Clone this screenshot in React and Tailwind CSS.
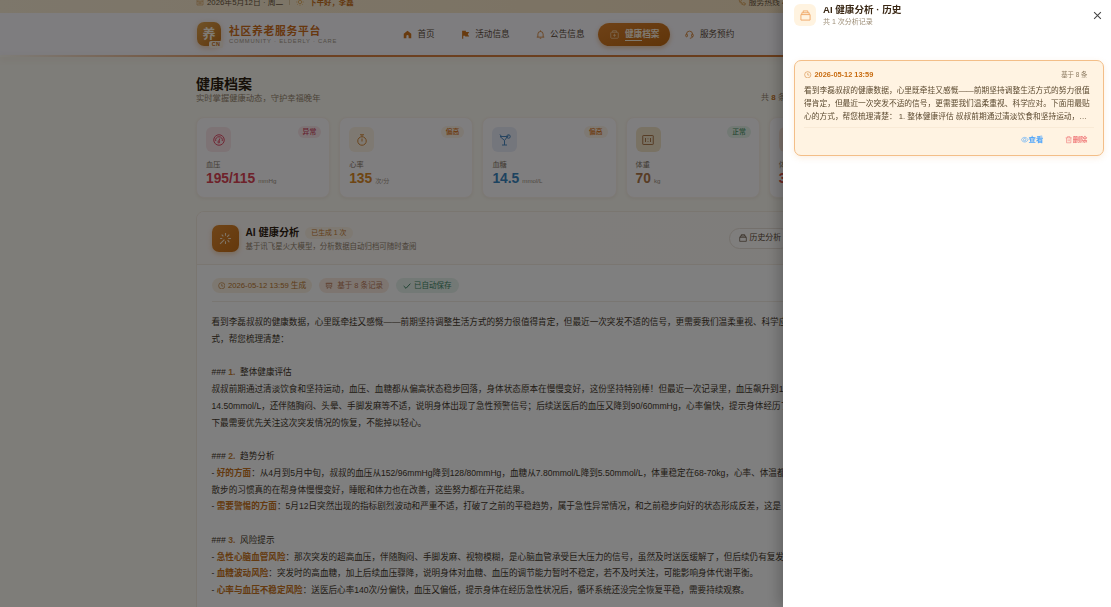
import React from 'react';
import clsx from 'clsx';

const icons = {
  calendar: <><path d="M3 5h18v16H3zM3 10h18M8 2v5M16 2v5M7 14h10M7 17h10" /></>,
  sun: <><circle cx="12" cy="12" r="5" /><path d="M12 1v3M12 20v3M1 12h3M20 12h3M4 4l2 2M18 18l2 2M4 20l2-2M18 6l2-2" /></>,
  phone: <path d="M4 3c-2 9 8 19 17 18l1-5-5-2-3 2c-3-1-5-4-6-6l2-3-2-5z" />,
  home: <path d="M12 2 2 10v12h7v-6a3 3 0 0 1 6 0v6h7V10z" fill="currentColor" stroke="none" />,
  flag: <path d="M3 2h10v3h9l-4 6 4 6H11v-2H6v8H3z" fill="currentColor" stroke="none" />,
  bell: <path d="M2 19h20M5 19v-8a7 7 0 0 1 14 0v8M12 1v3M10 22h4" />,
  kit: <><rect x="2" y="6" width="20" height="16" rx="2" /><path d="M7 6V2h10v4M12 10v8M8 14h8" /></>,
  headset: <><path d="M4 12V11a8 8 0 0 1 16 0v1M20 17c0 3-3 5-7 5" /><rect x="2" y="11" width="4.500" height="7" rx="2" /><rect x="17.500" y="11" width="4.500" height="7" rx="2" /></>,
  odometer: <><circle cx="12" cy="12" r="10.500" /><path d="M5.500 14a6.500 6.500 0 0 1 6.500-8.500 6.500 6.500 0 0 1 6.500 8.500M13.500 9l-1.500 5" /><circle cx="11.500" cy="16" r="1.800" /></>,
  timer: <><circle cx="12" cy="14" r="8.500" /><path d="M12 9v6M12 5.500V2M8 1.500h8" /></>,
  goblet: <><path d="M2 5h15l-6 8zM11 13v9M6 22h10M5 5 2 1M16 7l3-4" /><circle cx="19" cy="5" r="3.500" /></>,
  scale: <><rect x="1.500" y="3" width="21" height="18" rx="1" /><path d="M7 8v8M17 8v8M12 9v1.500M12 14v1.500" /></>,
  magic: <path d="M12 2v5M12 17v5M17 12h5M2 12h4M5 5l3 3M19 5l-4 4M16 15l3 4M10 14l-8 8" />,
  box: <path d="M2 10h20v12H2zM4 10V6h16v4M7 6V2h10v4" />,
  clock: <><circle cx="12" cy="12" r="10" /><path d="M12 6v7h5" /></>,
  data: <path d="M4 4h16v11H4zM2 4h20M8 8v4M12 7v5M16 9v3M9 15l-3 6M15 15l3 6" />,
  check: <path d="m2 12 7 7L22 5" />,
  view: <><path d="M1 12c5-10 17-10 22 0-5 10-17 10-22 0z" /><circle cx="12" cy="12" r="4" /></>,
  trash: <path d="M2 6h20M5 6v16h14V6M8 6V2h8v4M10 11v6M14 11v6" />,
  close: <path d="m3 3 18 18M21 3 3 21" />,
};

function Icon({ name, className, width = 2 }) {
  return (
    <svg viewBox="0 0 24 24" fill="none" stroke="currentColor" strokeWidth={width} className={clsx('shrink-0', className)}>
      {icons[name]}
    </svg>
  );
}

const navItems = [
  { icon: 'home', label: '首页' },
  { icon: 'flag', label: '活动信息' },
  { icon: 'bell', label: '公告信息' },
  { icon: 'kit', label: '健康档案', active: true },
  { icon: 'headset', label: '服务预约' },
];

const metrics = [
  { icon: 'odometer', label: '血压', value: '195/115', unit: 'mmHg', tag: '异常', box: 'bg-[#fae6ea] text-[#e4506a]', color: 'text-[#dd4455]', tagColor: 'bg-[#fae6ea] text-[#cc3f5c]' },
  { icon: 'timer', label: '心率', value: '135', unit: '次/分', tag: '偏高', box: 'bg-[#fcf2e4] text-[#d88c3c]', color: 'text-[#dc8a26]', tagColor: 'bg-[#fcf2e6] text-[#dc7a28]' },
  { icon: 'goblet', label: '血糖', value: '14.5', unit: 'mmol/L', tag: '偏高', box: 'bg-[#e9ecf8] text-[#4a88c0]', color: 'text-[#3a86c0]', tagColor: 'bg-[#fcf2e6] text-[#dc7a28]' },
  { icon: 'scale', label: '体重', value: '70', unit: 'kg', tag: '正常', box: 'bg-[#f2e4c8] text-[#ae7a4c]', color: 'text-[#b07848]', tagColor: 'bg-[#e4f2e8] text-[#4c9468]' },
  { icon: 'timer', label: '体温', value: '38.5', unit: '℃', tag: '偏高', box: 'bg-[#fbe6da] text-[#d8604c]', color: 'text-[#dd5048]', tagColor: 'bg-[#fcf2e6] text-[#dc7a28]' },
];

const report = [
  { text: '看到李磊叔叔的健康数据，心里既牵挂又感慨——前期坚持调整生活方式的努力很值得肯定，但最近一次突发不适的信号，更需要我们温柔重视、科学应对。' },
  { text: '式，帮您梳理清楚：' },
  {},
  { no: '1.', text: '整体健康评估' },
  { text: '叔叔前期通过清淡饮食和坚持运动，血压、血糖都从偏高状态稳步回落，身体状态原本在慢慢变好，这份坚持特别棒！但最近一次记录里，血压飙升到195/115mmHg' },
  { text: '14.50mmol/L，还伴随胸闷、头晕、手脚发麻等不适，说明身体出现了急性预警信号；后续送医后的血压又降到90/60mmHg，心率偏快，提示身体经历了' },
  { text: '下最需要优先关注这次突发情况的恢复，不能掉以轻心。' },
  {},
  { no: '2.', text: '趋势分析' },
  { key: '好的方面', text: '：从4月到5月中旬，叔叔的血压从152/96mmHg降到128/80mmHg，血糖从7.80mmol/L降到5.50mmol/L，体重稳定在68-70kg，心率、体温都' },
  { text: '散步的习惯真的在帮身体慢慢变好，睡眠和体力也在改善，这些努力都在开花结果。' },
  { key: '需要警惕的方面', text: '：5月12日突然出现的指标剧烈波动和严重不适，打破了之前的平稳趋势，属于急性异常情况，和之前稳步向好的状态形成反差，这是' },
  {},
  { no: '3.', text: '风险提示' },
  { key: '急性心脑血管风险', text: '：那次突发的超高血压，伴随胸闷、手脚发麻、视物模糊，是心脑血管承受巨大压力的信号，虽然及时送医缓解了，但后续仍有复发' },
  { key: '血糖波动风险', text: '：突发时的高血糖，加上后续血压骤降，说明身体对血糖、血压的调节能力暂时不稳定，若不及时关注，可能影响身体代谢平衡。' },
  { key: '心率与血压不稳定风险', text: '：送医后心率140次/分偏快，血压又偏低，提示身体在经历急性状况后，循环系统还没完全恢复平稳，需要持续观察。' },
];

const summary = [
  '看到李磊叔叔的健康数据，心里既牵挂又感慨——前期坚持调整生活方式的努力很值',
  '得肯定，但最近一次突发不适的信号，更需要我们温柔重视、科学应对。下面用最贴',
  '心的方式，帮您梳理清楚： 1. 整体健康评估 叔叔前期通过清淡饮食和坚持运动，…',
];

function TopBar() {
  return (
    <div className="flex h-[13px] items-start overflow-hidden bg-linear-to-r from-[#fbeed6] to-[#f6dfba] pl-[196px] text-[7.8px] leading-[5px] text-[#6b5640]">
      <Icon name="calendar" className="mr-[3px] -mt-[2px] size-[8px] text-[#d9a560]" />
      <span>2026年5月12日 · 周二</span>
      <span className="mx-[6px] h-[5px] w-px bg-[#e0c8a0]" />
      <Icon name="sun" className="mr-[5px] -mt-[2px] size-[8px] text-[#e0a040]" />
      <b className="text-[7.4px] text-[#c8701c]">下午好，李磊</b>
      <Icon name="phone" className="mr-[3px] ml-[384px] -mt-[2px] size-[8px] text-[#d08a30]" />
      <span>服务热线 400-888-6666</span>
    </div>
  );
}

function Header() {
  return (
    <>
      <header className="flex h-[42px] items-center bg-[#fcfaff] pl-[197px]">
        <div className="relative flex size-[24px] items-center justify-center rounded-[7px] bg-linear-to-br from-[#e2a650] to-[#c27018] font-['Liberation_Serif','Noto_Sans_CJK_SC',serif] text-[13px] font-bold text-[#fff6e8] shadow-[0_2px_6px_rgba(220,130,40,0.4)]">
          养
          <span className="absolute -right-[2px] -bottom-[2px] rounded-[2px] bg-[#fbf0e4] px-[2.5px] font-['Liberation_Sans',sans-serif] text-[5.4px] leading-[7px] tracking-[0.5px] text-[#c87020]">CN</span>
        </div>
        <div className="ml-[8px] w-[154px] whitespace-nowrap">
          <div className="text-[10.8px] leading-[14px] font-bold tracking-[0.7px] text-[#d0701c]">社区养老服务平台</div>
          <div className="text-[5.8px] leading-[7px] tracking-[0.78px] text-[#a89a8a]">COMMUNITY · ELDERLY · CARE</div>
        </div>
        <nav className="ml-[8px] flex gap-[3px]">
          {navItems.map(item => (
            <a
              key={item.label}
              className={clsx(
                'flex h-[23px] items-center gap-[5.5px] rounded-full pr-[11px] pl-[12px] text-[8.6px] whitespace-nowrap',
                item.active ? 'bg-linear-to-br from-[#de842e] to-[#c06a12] font-bold text-[#fff4e4] shadow-[0_2px_5px_rgba(210,120,30,0.4)]' : 'text-[#5c4c3a]'
              )}
            >
              <Icon name={item.icon} className={clsx('size-[9px]', item.active ? 'text-[#f8d4a8]' : 'text-[#d0741c]')} />
              <span className="relative">
                {item.label}
                {item.active && <i className="absolute bottom-[-1px] left-0 h-[1.5px] w-[17px] bg-[#fff2dc]" />}
              </span>
            </a>
          ))}
        </nav>
      </header>
      <div className="h-[2px] bg-linear-to-r from-transparent via-[#dc8444] via-25% to-[#c8702c] shadow-[0_2px_6px_rgba(160,110,60,0.18)]" />
    </>
  );
}

function MetricCard({ item }) {
  return (
    <div className="h-[81px] rounded-[8px] border border-[#fbf3ea] bg-[#fffcff] px-[9px] pt-[9px] whitespace-nowrap shadow-[0_1px_3px_rgba(120,90,50,0.08)]">
      <div className="flex items-start justify-between">
        <div className={clsx('flex size-[25px] items-center justify-center rounded-[6px]', item.box)}>
          <Icon name={item.icon} className="size-[12px]" />
        </div>
        <span className={clsx('-mt-[1.5px] -mr-px rounded-full px-[5px] text-[6.8px] leading-[12px] font-medium', item.tagColor)}>{item.tag}</span>
      </div>
      <div className="mt-[7px] text-[7.2px] leading-[11px] text-[#857866]">{item.label}</div>
      <div className="mt-px flex items-baseline gap-[3px] leading-[16px]">
        <b className={clsx('text-[13.8px]', item.color)}>{item.value}</b>
        <span className="text-[6.2px] text-[#a09484]">{item.unit}</span>
      </div>
    </div>
  );
}

function ReportLine({ line }) {
  return (
    <div className="h-[16.77px]">
      {line.no && <>### <b className="mr-[2.3px] font-bold text-[#c88438]">{line.no}</b> </>}
      {line.key && <>- <b className="text-[#c87420]">{line.key}</b></>}
      {line.text}
    </div>
  );
}

function AnalysisPanel() {
  return (
    <section className="mt-[13px] h-[420px] overflow-hidden rounded-t-[8px] border border-[#f5ece0] bg-[#fffeff] whitespace-nowrap">
      <div className="flex h-[53px] items-center border-b border-[#f5ece2] bg-linear-to-r from-[#fffaf7] to-[#fdfbf6] pl-[14.5px]">
        <div className="flex size-[27px] items-center justify-center rounded-[7px] bg-linear-to-br from-[#e08a30] to-[#c87018] text-[#ffe8cc] shadow-[0_2px_5px_rgba(220,130,40,0.35)]">
          <Icon name="magic" className="size-[13px]" />
        </div>
        <div className="ml-[7px] pt-[2px]">
          <div className="flex items-center gap-[6px]">
            <b className="text-[10.2px] leading-[14px] text-[#2e2010]">AI 健康分析</b>
            <span className="rounded-full bg-[#fcf2e4] px-[6px] text-[6.9px] leading-[12px] text-[#c87c30]">已生成 1 次</span>
          </div>
          <div className="text-[7.44px] leading-[13px] text-[#93836e]">基于讯飞星火大模型，分析数据自动归档可随时查阅</div>
        </div>
        <div className="ml-[312px] flex h-[21px] items-center gap-[3px] rounded-full border border-[#e9e0d8] bg-[#fffcfa] px-[9px] text-[7.9px] text-[#5e4c38]">
          <Icon name="box" className="size-[8px]" />
          历史分析
        </div>
      </div>
      <div className="px-[14.5px] pt-[13px]">
        <div className="flex gap-[7px] border-b border-[#f3ece4] pb-[8px] text-[7.5px] leading-[15px]">
          <span className="flex items-center gap-[3px] rounded-full bg-[#fbf1e2] px-[6px] text-[7.7px] text-[#bc7830]"><Icon name="clock" className="size-[7.5px]" />2026-05-12 13:59 生成</span>
          <span className="flex items-center gap-[4px] rounded-full bg-[#faebe0] px-[6px] text-[#bc7c5c]"><Icon name="data" className="size-[8px]" />基于 8 条记录</span>
          <span className="flex items-center gap-[3px] rounded-full bg-[#e6f2ec] px-[7px] text-[#428868]"><Icon name="check" width={3} className="size-[8px]" />已自动保存</span>
        </div>
        <div className="mt-[12px] text-[8.6px] leading-[16.77px] text-[#44382a]">
          {report.map((line, i) => <ReportLine key={i} line={line} />)}
        </div>
      </div>
    </section>
  );
}

function HistoryDrawer() {
  return (
    <aside className="fixed inset-y-0 right-0 w-[328.5px] bg-white pl-[11.5px] whitespace-nowrap shadow-[-5px_0_12px_rgba(0,0,0,0.2)]">
      <div className="flex h-[31px] items-center pr-[9.5px] pb-px">
        <div className="flex size-[22px] items-center justify-center rounded-[6px] bg-[#fff3e0] text-[#f0a868]">
          <Icon name="box" className="size-[11px]" />
        </div>
        <div className="ml-[7px] flex-1">
          <div className="text-[9.6px] leading-[13px] font-bold text-[#3a2815]">AI 健康分析 · 历史</div>
          <div className="text-[7px] leading-[11px] text-[#9c8d76]">共 1 次分析记录</div>
        </div>
        <Icon name="close" className="size-[9px] text-[#444]" width={2.8} />
      </div>
      <div className="mt-[29px] h-[96px] w-[309.5px] rounded-[7px] border border-[#f3be88] bg-[#fff3e2] px-[9px] pt-[7.5px] shadow-[0_2px_6px_rgba(230,150,60,0.15)]">
        <div className="flex items-center text-[7.4px] leading-[12px]">
          <Icon name="clock" className="mr-[3px] size-[7.5px] text-[#d8924c]" />
          <b className="text-[#c86c10]">2026-05-12 13:59</b>
          <span className="mr-[6px] ml-auto text-[6.4px] text-[#8c7a60]">基于 8 条</span>
        </div>
        <div className="mt-[3px] text-[7.73px] leading-[13.3px] text-[#5c4a30]">
          {summary.map(t => <div key={t}>{t}</div>)}
        </div>
        <div className="mt-[4px] flex justify-end gap-[22px] border-t border-[#f9ead6] pt-[6px] pr-[6px] text-[7.4px] leading-[11px] font-bold">
          <span className="flex items-center text-[#52a6fa]"><Icon name="view" className="size-[7.4px]" />查看</span>
          <span className="flex items-center text-[#f07c7c]"><Icon name="trash" className="size-[7.4px]" />删除</span>
        </div>
      </div>
    </aside>
  );
}

export default function App() {
  return (
    <div className="h-[607px] overflow-hidden bg-[#fdfaf2] font-['Liberation_Sans','Noto_Sans_CJK_SC',sans-serif]">
      <TopBar />
      <Header />
      <main className="ml-[196px] w-[707px] pt-[19px]">
        <div className="flex h-[41px] items-start justify-between">
          <div>
            <h1 className="text-[14px] leading-[16px] font-bold text-[#2c1e10]">健康档案</h1>
            <p className="text-[8.3px] leading-[12px] text-[#96866f]">实时掌握健康动态，守护幸福晚年</p>
          </div>
          <div className="mt-[16px] w-[142px] text-[8px] leading-[12px] text-[#96866f]">共 <b className="text-[#c8741c]">8</b> 条记录</div>
        </div>
        <div className="grid grid-cols-5 gap-[9px]">
          {metrics.map(item => <MetricCard key={item.label} item={item} />)}
        </div>
        <AnalysisPanel />
      </main>
      <div className="fixed inset-0 bg-black/50" />
      <HistoryDrawer />
    </div>
  );
}
